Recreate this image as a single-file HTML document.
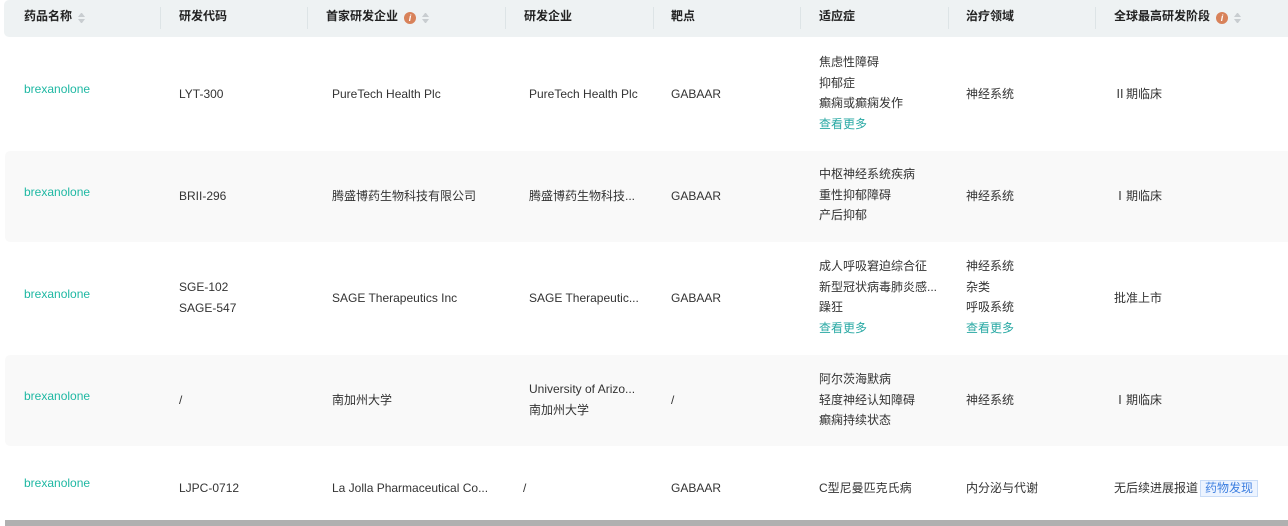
<!DOCTYPE html>
<html><head><meta charset="utf-8"><style>
body{margin:0;width:1288px;height:526px;overflow:hidden;background:#fff;font-family:"Liberation Sans","Noto Sans CJK SC",sans-serif;font-size:12px;color:#333;position:relative}
.a{position:absolute;white-space:nowrap;line-height:20.5px}
.hd{position:absolute;left:4px;top:0;width:1300px;height:37px;background:#eef2f3;border-radius:5px}
.sep{position:absolute;top:7px;width:1px;height:22px;background:#dde4e6}
.h{font-weight:bold;color:#222;top:6px}
.row{position:absolute;left:5px;width:1300px;background:#f9f9f9;border-radius:5px}
.lk{color:#1fb8a3}
.more{color:#2aa9a4}
.i{display:inline-block;width:12px;height:12px;border-radius:50%;background:#d8825a;color:#fff;font-size:9px;line-height:12px;text-align:center;font-weight:bold;vertical-align:-1px;margin-left:6px;font-style:italic}
.s{display:inline-block;width:7px;vertical-align:-3px;margin-left:6px}
.s:before{content:"";display:block;border:3.5px solid transparent;border-bottom:4px solid #c8cdd0;border-top:0;margin-bottom:2px}
.s:after{content:"";display:block;border:3.5px solid transparent;border-top:4px solid #c8cdd0;border-bottom:0}
.tag{display:inline-block;border:1px solid #c9dcf7;background:#edf4ff;color:#3d7fe0;padding:0 4px;line-height:15px;margin-left:2px}
.sb{position:absolute;left:5px;top:520px;width:1283px;height:6px;background:#b0b0b0}
</style></head><body>
<div class="hd"></div>
<div class="sep" style="left:160px"></div><div class="sep" style="left:307px"></div><div class="sep" style="left:505px"></div><div class="sep" style="left:653px"></div><div class="sep" style="left:800px"></div><div class="sep" style="left:948px"></div><div class="sep" style="left:1095px"></div>
<div class="a h" style="left:24px">药品名称<span class="s"></span></div>
<div class="a h" style="left:179px">研发代码</div>
<div class="a h" style="left:326px">首家研发企业<span class="i">i</span><span class="s"></span></div>
<div class="a h" style="left:524px">研发企业</div>
<div class="a h" style="left:671px">靶点</div>
<div class="a h" style="left:819px">适应症</div>
<div class="a h" style="left:966px">治疗领域</div>
<div class="a h" style="left:1114px">全球最高研发阶段<span class="i">i</span><span class="s"></span></div>

<div class="row" style="top:151px;height:91px"></div>
<div class="row" style="top:355px;height:91px"></div>

<div class="a lk" style="left:24px;top:79px">brexanolone</div>
<div class="a" style="left:179px;top:84px">LYT-300</div>
<div class="a" style="left:332px;top:84px">PureTech Health Plc</div>
<div class="a" style="left:529px;top:84px">PureTech Health Plc</div>
<div class="a" style="left:671px;top:84px">GABAAR</div>
<div class="a" style="left:819px;top:52px">焦虑性障碍<br>抑郁症<br>癫痫或癫痫发作<br><span class="more">查看更多</span></div>
<div class="a" style="left:966px;top:84px">神经系统</div>
<div class="a" style="left:1114px;top:84px">Ⅱ期临床</div>

<div class="a lk" style="left:24px;top:182px">brexanolone</div>
<div class="a" style="left:179px;top:186px">BRII-296</div>
<div class="a" style="left:332px;top:186px">腾盛博药生物科技有限公司</div>
<div class="a" style="left:529px;top:186px">腾盛博药生物科技...</div>
<div class="a" style="left:671px;top:186px">GABAAR</div>
<div class="a" style="left:819px;top:164px">中枢神经系统疾病<br>重性抑郁障碍<br>产后抑郁</div>
<div class="a" style="left:966px;top:186px">神经系统</div>
<div class="a" style="left:1114px;top:186px">Ⅰ期临床</div>

<div class="a lk" style="left:24px;top:284px">brexanolone</div>
<div class="a" style="left:179px;top:277px">SGE-102<br>SAGE-547</div>
<div class="a" style="left:332px;top:288px">SAGE Therapeutics Inc</div>
<div class="a" style="left:529px;top:288px">SAGE Therapeutic...</div>
<div class="a" style="left:671px;top:288px">GABAAR</div>
<div class="a" style="left:819px;top:256px">成人呼吸窘迫综合征<br>新型冠状病毒肺炎感...<br>躁狂<br><span class="more">查看更多</span></div>
<div class="a" style="left:966px;top:256px">神经系统<br>杂类<br>呼吸系统<br><span class="more">查看更多</span></div>
<div class="a" style="left:1114px;top:288px">批准上市</div>

<div class="a lk" style="left:24px;top:386px">brexanolone</div>
<div class="a" style="left:179px;top:390px">/</div>
<div class="a" style="left:332px;top:390px">南加州大学</div>
<div class="a" style="left:529px;top:379px">University of Arizo...<br>南加州大学</div>
<div class="a" style="left:671px;top:390px">/</div>
<div class="a" style="left:819px;top:369px">阿尔茨海默病<br>轻度神经认知障碍<br>癫痫持续状态</div>
<div class="a" style="left:966px;top:390px">神经系统</div>
<div class="a" style="left:1114px;top:390px">Ⅰ期临床</div>

<div class="a lk" style="left:24px;top:473px">brexanolone</div>
<div class="a" style="left:179px;top:478px">LJPC-0712</div>
<div class="a" style="left:332px;top:478px">La Jolla Pharmaceutical Co...</div>
<div class="a" style="left:523px;top:478px">/</div>
<div class="a" style="left:671px;top:478px">GABAAR</div>
<div class="a" style="left:819px;top:478px">C型尼曼匹克氏病</div>
<div class="a" style="left:966px;top:478px">内分泌与代谢</div>
<div class="a" style="left:1114px;top:478px">无后续进展报道<span class="tag">药物发现</span></div>

<div class="sb"></div>
</body></html>
